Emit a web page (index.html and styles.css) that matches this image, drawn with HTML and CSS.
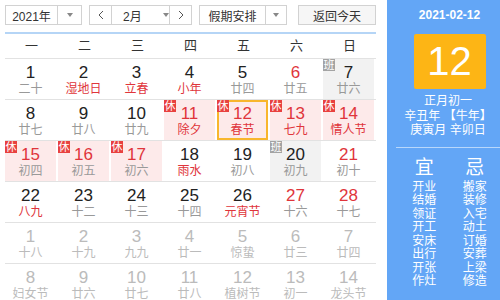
FILE: index.html
```html
<!DOCTYPE html>
<html lang="zh-CN">
	<head>
		<meta charset="UTF-8" />
		<title>万年历</title>
		<link rel="stylesheet" href="styles.css">
	</head>
	<body>
		<div class="calendar">
			<section class="main">
				<div class="toolbar">
					<div class="ctl year">
						<span class="label">2021年</span>
						<span class="drop"><i class="tri"></i></span>
					</div>
					<div class="ctl month">
						<span class="nav"><svg width="6" height="10" viewBox="0 0 6 10"><polyline points="5,1 1,5 5,9" fill="none" stroke="#555" stroke-width="1"/></svg></span>
						<span class="mlabel">2月<i class="tri"></i></span>
						<span class="nav"><svg width="6" height="10" viewBox="0 0 6 10"><polyline points="1,1 5,5 1,9" fill="none" stroke="#555" stroke-width="1"/></svg></span>
					</div>
					<div class="ctl holiday">
						<span class="label">假期安排</span>
						<span class="drop"><i class="tri"></i></span>
					</div>
					<div class="ctl today">返回今天</div>
				</div>

				<div class="weekdays">
					<span>一</span><span>二</span><span>三</span><span>四</span><span>五</span><span class="red">六</span><span class="red">日</span>
				</div>

				<div class="week">
					<div class="day"><b class="num">1</b><span class="lun">二十</span></div>
					<div class="day"><b class="num">2</b><span class="lun red">湿地日</span></div>
					<div class="day"><b class="num">3</b><span class="lun red">立春</span></div>
					<div class="day"><b class="num">4</b><span class="lun red">小年</span></div>
					<div class="day"><b class="num">5</b><span class="lun">廿四</span></div>
					<div class="day"><b class="num red">6</b><span class="lun">廿五</span></div>
					<div class="day work"><i class="badge">班</i><b class="num">7</b><span class="lun">廿六</span></div>
				</div>
				<div class="week">
					<div class="day"><b class="num">8</b><span class="lun">廿七</span></div>
					<div class="day"><b class="num">9</b><span class="lun">廿八</span></div>
					<div class="day"><b class="num">10</b><span class="lun">廿九</span></div>
					<div class="day rest"><i class="badge">休</i><b class="num red">11</b><span class="lun red">除夕</span></div>
					<div class="day rest sel"><i class="badge">休</i><b class="num red">12</b><span class="lun red">春节</span></div>
					<div class="day rest"><i class="badge">休</i><b class="num red">13</b><span class="lun red">七九</span></div>
					<div class="day rest"><i class="badge">休</i><b class="num red">14</b><span class="lun red">情人节</span></div>
				</div>
				<div class="week">
					<div class="day rest"><i class="badge">休</i><b class="num red">15</b><span class="lun">初四</span></div>
					<div class="day rest"><i class="badge">休</i><b class="num red">16</b><span class="lun">初五</span></div>
					<div class="day rest"><i class="badge">休</i><b class="num red">17</b><span class="lun">初六</span></div>
					<div class="day"><b class="num">18</b><span class="lun red">雨水</span></div>
					<div class="day"><b class="num">19</b><span class="lun">初八</span></div>
					<div class="day work"><i class="badge">班</i><b class="num">20</b><span class="lun">初九</span></div>
					<div class="day"><b class="num red">21</b><span class="lun">初十</span></div>
				</div>
				<div class="week">
					<div class="day"><b class="num">22</b><span class="lun red">八九</span></div>
					<div class="day"><b class="num">23</b><span class="lun">十二</span></div>
					<div class="day"><b class="num">24</b><span class="lun">十三</span></div>
					<div class="day"><b class="num">25</b><span class="lun">十四</span></div>
					<div class="day"><b class="num">26</b><span class="lun red">元宵节</span></div>
					<div class="day"><b class="num red">27</b><span class="lun">十六</span></div>
					<div class="day"><b class="num red">28</b><span class="lun">十七</span></div>
				</div>
				<div class="week other">
					<div class="day"><b class="num">1</b><span class="lun">十八</span></div>
					<div class="day"><b class="num">2</b><span class="lun">十九</span></div>
					<div class="day"><b class="num">3</b><span class="lun">九九</span></div>
					<div class="day"><b class="num">4</b><span class="lun">廿一</span></div>
					<div class="day"><b class="num">5</b><span class="lun">惊蛰</span></div>
					<div class="day"><b class="num">6</b><span class="lun">廿三</span></div>
					<div class="day"><b class="num">7</b><span class="lun">廿四</span></div>
				</div>
				<div class="week other">
					<div class="day"><b class="num">8</b><span class="lun">妇女节</span></div>
					<div class="day"><b class="num">9</b><span class="lun">廿六</span></div>
					<div class="day"><b class="num">10</b><span class="lun">廿七</span></div>
					<div class="day"><b class="num">11</b><span class="lun">廿八</span></div>
					<div class="day"><b class="num">12</b><span class="lun">植树节</span></div>
					<div class="day"><b class="num">13</b><span class="lun">初一</span></div>
					<div class="day"><b class="num">14</b><span class="lun">龙头节</span></div>
				</div>
			</section>

			<aside class="side">
				<div class="date">2021-02-12</div>
				<div class="big">12</div>
				<div class="lunar">
					<p>正月初一</p>
					<p>辛丑年 【牛年】</p>
					<p>庚寅月 辛卯日</p>
				</div>
				<div class="advice">
					<ul>
						<li class="head">宜</li>
						<li>开业</li><li>结婚</li><li>领证</li><li>开工</li>
						<li>安床</li><li>出行</li><li>开张</li><li>作灶</li>
					</ul>
					<ul>
						<li class="head">忌</li>
						<li>搬家</li><li>装修</li><li>入宅</li><li>动土</li>
						<li>订婚</li><li>安葬</li><li>上梁</li><li>修造</li>
					</ul>
				</div>
			</aside>
		</div>
	</body>
</html>
```

FILE: styles.css
```css
body {
	margin: 0;
	overflow: hidden;
	font-family: "Liberation Sans", "Noto Sans CJK SC", sans-serif;
	background: #fff;
}

.calendar {
	display: flex;
	width: 500px;
	height: 300px;
}

.main {
	width: 371px;
	padding: 5px 11px 0 5px;
	flex-shrink: 0;
}

/* toolbar */
.toolbar {
	display: flex;
	height: 20px;
	padding-bottom: 7px;
	border-bottom: 2px solid #b5d5f6;
}
.ctl {
	box-sizing: border-box;
	height: 20px;
	border: 1px solid #d2d2d2;
	background: #fff;
	display: flex;
	align-items: stretch;
	font-size: 12px;
	color: #333;
}
.ctl .label {
	flex: 1;
	display: flex;
	align-items: center;
	justify-content: center;
}
.ctl .drop {
	border-left: 1px solid #d2d2d2;
	display: flex;
	align-items: center;
	justify-content: center;
}
.tri {
	display: inline-block;
	width: 0;
	height: 0;
	border-left: 3px solid transparent;
	border-right: 3px solid transparent;
	border-top: 4px solid #888;
}
.year {
	width: 77px;
}
.year .drop {
	width: 23px;
}
.month {
	width: 103px;
	margin-left: 7px;
}
.month .nav {
	width: 21px;
	display: flex;
	align-items: center;
	justify-content: center;
}
.month .mlabel {
	flex: 1;
	border-left: 1px solid #d2d2d2;
	border-right: 1px solid #d2d2d2;
	display: flex;
	align-items: center;
	padding-left: 11px;
	gap: 21px;
}
.holiday {
	width: 88px;
	margin-left: 7px;
}
.holiday .drop {
	width: 20px;
}
.today {
	width: 78px;
	margin-left: 11px;
	background: #f6f6f6;
	justify-content: center;
	align-items: center;
}

/* grid */
.weekdays {
	display: flex;
	height: 24px;
	border-bottom: 1px solid #e2e2e2;
}
.weekdays span {
	width: 53px;
	text-align: center;
	line-height: 24px;
	font-size: 13px;
	color: #333;
}
.red {
	color: #e0353b;
}

.week {
	display: flex;
	height: 40px;
	border-bottom: 1px solid #e2e2e2;
}
.day {
	position: relative;
	box-sizing: border-box;
	width: 51px;
	margin-right: 2px;
	height: 40px;
	padding-top: 6px;
	text-align: center;
}
.num {
	display: block;
	font-size: 17px;
	line-height: 16px;
	font-weight: normal;
	color: #222;
}
.num.red {
	color: #e0353b;
}
.lun {
	display: block;
	font-size: 12px;
	line-height: 14px;
	margin-top: 1px;
	color: #999;
}
.lun.red {
	color: #e0353b;
}
.rest {
	background: #fdeaea;
}
.work {
	background: #f2f2f2;
}
.sel {
	border: 2px solid #f8b62d;
	padding-top: 4px;
}
.badge {
	position: absolute;
	left: 0;
	top: 0;
	width: 12px;
	height: 12px;
	font-size: 11px;
	line-height: 12px;
	font-style: normal;
	color: #fff;
	background: #e8413f;
}
.sel .badge {
	left: -2px;
	top: -2px;
}
.work .badge {
	background: #a3a3a3;
}
.other .num,
.other .lun {
	color: #bbb;
}

/* side panel */
.side {
	flex: 1;
	background: #63a6f6;
	color: #fff;
	padding-left: 12px;
	text-align: center;
}
.date {
	margin-top: 8px;
	font-size: 12px;
	line-height: 14px;
	font-weight: bold;
}
.big {
	width: 72px;
	height: 55px;
	margin: 12px auto 0;
	background: #fdb515;
	border-radius: 2px;
	font-size: 40px;
	line-height: 55px;
}
.lunar {
	margin-top: 5px;
	padding-bottom: 9px;
	border-bottom: 1px solid rgba(255, 255, 255, 0.55);
	margin-left: -3px;
}
.lunar p {
	margin: 0;
	font-size: 12px;
	line-height: 14.5px;
}
.advice {
	display: flex;
	margin-top: 9px;
}
.advice ul {
	list-style: none;
	margin: 0;
	padding: 0;
	flex: 1;
}
.advice li {
	font-size: 12px;
	line-height: 13.5px;
}
.advice .head {
	font-size: 19px;
	line-height: 22px;
	margin-bottom: 2px;
}
```
